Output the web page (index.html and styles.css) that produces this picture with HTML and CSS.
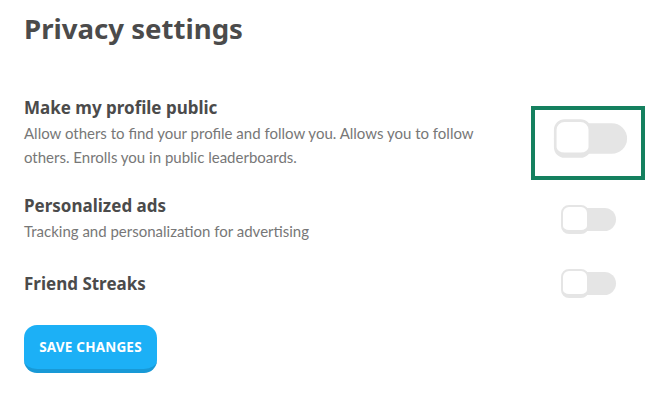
FILE: index.html
```html
<!DOCTYPE html>
<html>
<head>
<meta charset="utf-8">
<link rel="stylesheet" href="styles.css">
</head>
<body>
<main class="page">
  <h1 class="title">Privacy settings</h1>
  <div class="rows">
    <div class="row row-first">
      <div class="text">
        <div class="label">Make my profile public</div>
        <div class="desc">Allow others to find your profile and follow you. Allows you to follow others. Enrolls you in public leaderboards.</div>
      </div>
      <div class="switch focused">
        <div class="switch-inner big">
          <div class="track"><div class="knob"></div></div>
        </div>
      </div>
    </div>
    <div class="row row-second">
      <div class="text">
        <div class="label">Personalized ads</div>
        <div class="desc">Tracking and personalization for advertising</div>
      </div>
      <div class="switch">
        <div class="switch-inner">
          <div class="track"><div class="knob"></div></div>
        </div>
      </div>
    </div>
    <div class="row row-third">
      <div class="text">
        <div class="label">Friend Streaks</div>
      </div>
      <div class="switch">
        <div class="switch-inner">
          <div class="track"><div class="knob"></div></div>
        </div>
      </div>
    </div>
  </div>
  <button class="save">SAVE CHANGES</button>
</main>
</body>
</html>
```

FILE: styles.css
```css
* { box-sizing: border-box; }
html, body { margin: 0; padding: 0; background: #fff; }
body { font-family: Lato, "Noto Sans", sans-serif; }
.page { padding: 8px 32px 0 24px; width: 648px; }
.title {
  margin: 0;
  font-family: "Noto Sans", Lato, sans-serif;
  font-size: 27.6px;
  line-height: 40px;
  font-weight: 700;
  color: #4b4b4b;
}
.rows { margin-top: 49px; display: flex; flex-direction: column; }
.row { display: flex; align-items: center; justify-content: space-between; }
.row-second { margin-top: 26px; }
.row-third { margin-top: 26px; }
.text { width: 470px; }
.label {
  font-family: "Noto Sans", Lato, sans-serif;
  font-size: 17px;
  line-height: 22px;
  font-weight: 700;
  color: #4b4b4b;
}
.desc {
  margin-top: 2px;
  font-size: 15px;
  line-height: 24px;
  color: #777;
}
.switch { position: relative; width: 55px; height: 29px; }
.switch.focused { transform: translateY(5px); }
.switch.focused::after {
  content: "";
  position: absolute;
  left: -30px;
  top: -18px;
  width: 106px;
  height: 66px;
  border: 4px solid #15805f;
}
.switch-inner { width: 55px; height: 29px; display: flex; align-items: center; }
.switch-inner.big { transform: translateX(2px) scale(1.33); }
.track {
  position: relative;
  width: 55px;
  height: 23px;
  border-radius: 12px;
  background: #e5e5e5;
}
.knob {
  position: absolute;
  left: 0;
  top: -3px;
  width: 28px;
  height: 29px;
  border: 2px solid #e5e5e5;
  border-bottom-width: 4px;
  border-radius: 8px;
  background: #fff;
}
.save {
  margin-top: 27px;
  width: 133px;
  height: 48px;
  border: none;
  border-bottom: 4px solid #1899d6;
  border-radius: 13px;
  background: #1cb0f6;
  color: #fff;
  font-family: "Noto Sans", Lato, sans-serif;
  font-weight: 700;
  font-size: 13.5px;
  letter-spacing: 0.2px;
  padding: 0;
}
```
